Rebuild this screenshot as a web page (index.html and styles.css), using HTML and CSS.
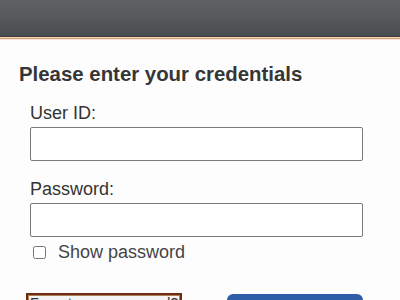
FILE: index.html
```html
<!DOCTYPE html>
<html>
<head>
<meta charset="utf-8">
<link rel="stylesheet" href="styles.css">
</head>
<body>
<header class="topbar"></header>
<div class="stripe"></div>
<main class="content">
  <h1 class="title">Please enter your credentials</h1>
  <form class="form">
    <label class="label" for="uid">User ID:</label>
    <input class="field" id="uid" type="text">
    <label class="label label-gap" for="pw">Password:</label>
    <input class="field" id="pw" type="password">
    <div class="check-row">
      <input class="check" id="show" type="checkbox">
      <label class="check-label" for="show">Show password</label>
    </div>
    <div class="actions">
      <button class="btn-forgot" type="button">Forgot your password?</button>
      <button class="btn-login" type="submit">Log in</button>
    </div>
  </form>
</main>
</body>
</html>
```

FILE: styles.css
```css
html, body {
  margin: 0;
  padding: 0;
  background: #fdfdfd;
  font-family: "Liberation Sans", Arial, sans-serif;
  overflow: hidden;
}
.topbar {
  height: 36px;
  background: linear-gradient(#606164, #4b4e50);
  border-bottom: 1px solid #3f393b;
}
.stripe {
  height: 1px;
  border-top: 1px solid #f1d9c6;
  border-bottom: 1px solid #f7e6d9;
  background: #d49c70;
}
.content {
  padding-left: 19px;
}
.title {
  margin: 22px 0 0 0;
  font-size: 20.4px;
  line-height: 24px;
  font-weight: bold;
  color: #363636;
}
.form {
  display: flex;
  flex-direction: column;
  padding-left: 11px;
  width: 333px;
  margin-top: 16px;
}
.label {
  font-size: 18px;
  line-height: 22px;
  color: #333;
  margin-bottom: 3px;
}
.label-gap {
  margin-top: 17px;
}
.field {
  box-sizing: border-box;
  width: 333px;
  height: 34px;
  margin: 0;
  border: 1px solid #7a7a7a;
  border-radius: 2px;
  background: #fff;
}
.check-row {
  display: flex;
  align-items: center;
  margin-top: 5px;
  height: 20px;
}
.check {
  width: 13px;
  height: 13px;
  margin: 0 12px 0 3px;
}
.check-label {
  font-size: 18px;
  line-height: 20px;
  color: #444;
}
.actions {
  display: flex;
  align-items: flex-start;
  margin-top: 31px;
  margin-left: -4px;
  gap: 45px;
}
.btn-forgot {
  width: 157px;
  height: 34px;
  box-sizing: border-box;
  border: 2px solid #6b2f14;
  outline: 1px solid #b07a5c;
  outline-offset: -3px;
  background: #f4f4f4;
  color: #333;
  font-family: "Liberation Sans", Arial, sans-serif;
  font-size: 14.5px;
  padding: 0;
  line-height: 16px;
  text-align: center;
  display: flex;
  align-items: flex-start;
  justify-content: center;
  white-space: nowrap;
}
.btn-login {
  width: 136px;
  height: 34px;
  border: none;
  border-radius: 6px;
  background: #2e5ea8;
  color: #fff;
  font-family: "Liberation Sans", Arial, sans-serif;
  font-size: 17px;
  margin-top: 1px;
}
```
